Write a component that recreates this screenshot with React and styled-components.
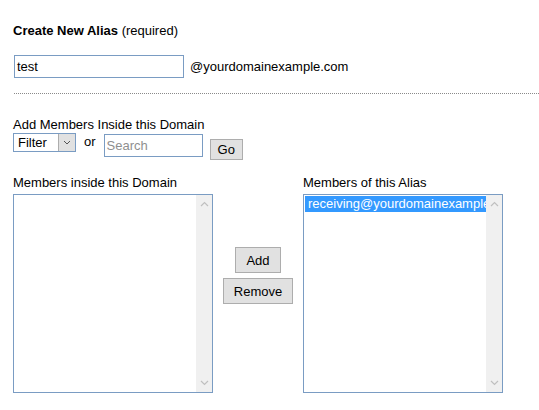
import React from 'react';
import styled, { createGlobalStyle } from 'styled-components';

const GlobalStyle = createGlobalStyle`
  body {
    margin: 0;
    background: #fff;
    font-family: "Liberation Sans", Arial, sans-serif;
    font-size: 13px;
    color: #000;
  }
`;

const Page = styled.div`
  padding: 23px 0 0 13px;
  width: 526px;
`;

const Title = styled.div`
  font-weight: bold;
  line-height: 15px;
  span {
    font-weight: normal;
  }
`;

const AliasRow = styled.div`
  display: flex;
  align-items: center;
  gap: 6px;
  margin-top: 17px;
  padding-left: 1px;
`;

const TextBox = styled.div`
  box-sizing: border-box;
  width: ${p => p.width}px;
  height: 23px;
  border: 1px solid #7a9cc3;
  padding: 3px 2px;
  line-height: 15px;
  color: ${p => (p.placeholder ? '#8f8f8f' : '#000')};
  margin-top: ${p => p.offset || 0}px;
`;

const Divider = styled.div`
  margin: 15px 0 0 1px;
  border-top: 1px dotted #8a8a8a;
`;

const Label = styled.div`
  line-height: 15px;
  margin-top: ${p => p.top}px;
`;

const FilterRow = styled.div`
  display: flex;
  align-items: flex-start;
  margin-top: 1px;
`;

const Select = styled.div`
  box-sizing: border-box;
  width: 63px;
  height: 19px;
  border: 1px solid #7a9cc3;
  display: flex;
  line-height: 15px;
  span {
    flex: 1;
    padding: 1px 0 0 4px;
  }
`;

const SelectArrow = styled.div`
  width: 16px;
  background: #e1e1e1;
  border-left: 1px solid #adadad;
  display: flex;
  align-items: center;
  justify-content: center;
`;

const Or = styled.span`
  line-height: 15px;
  margin: 1px 8px 0 8px;
`;

const Button = styled.button`
  box-sizing: border-box;
  height: ${p => p.h || 26}px;
  padding: 0 ${p => p.px || 10}px;
  background: #e1e1e1;
  border: 1px solid #adadad;
  border-radius: 0;
  font-family: inherit;
  font-size: 13px;
  color: #000;
  margin-top: ${p => p.offset || 0}px;
  margin-left: ${p => p.ml || 0}px;
`;

const Columns = styled.div`
  display: flex;
  margin-top: 2px;
`;

const Column = styled.div`
  width: ${p => p.width}px;
  display: flex;
  flex-direction: column;
`;

const Middle = styled.div`
  width: 90px;
  display: flex;
  flex-direction: column;
  align-items: center;
  gap: 5px;
  padding-top: 85px;
`;

const ListBox = styled.div`
  box-sizing: border-box;
  margin-top: 4px;
  width: 200px;
  height: 199px;
  border: 1px solid #7a9cc3;
  display: flex;
`;

const Items = styled.div`
  flex: 1;
  overflow: hidden;
  padding: 1px 0 0 1px;
`;

const Item = styled.div`
  height: 16px;
  line-height: 16px;
  padding-left: 3px;
  white-space: nowrap;
  overflow: hidden;
  background: ${p => (p.selected ? '#3399ff' : 'transparent')};
  color: ${p => (p.selected ? '#fff' : '#000')};
`;

const Scrollbar = styled.div`
  width: 16px;
  background: #f0f0f0;
  display: flex;
  flex-direction: column;
  justify-content: space-between;
  align-items: center;
  padding: 6px 0;
`;

const Chevron = ({ down }) => (
  <svg width="9" height="6" viewBox="0 0 9 6">
    <path
      d={down ? 'M1 1 L4.5 4.5 L8 1' : 'M1 5 L4.5 1.5 L8 5'}
      fill="none"
      stroke="#c0c0c0"
      strokeWidth="1.2"
    />
  </svg>
);

const List = ({ items = [] }) => (
  <ListBox>
    <Items>
      {items.map(it => (
        <Item key={it.text} selected={it.selected}>{it.text}</Item>
      ))}
    </Items>
    <Scrollbar>
      <Chevron />
      <Chevron down />
    </Scrollbar>
  </ListBox>
);

export default function App() {
  return (
    <Page>
      <GlobalStyle />
      <Title>
        Create New Alias <span>(required)</span>
      </Title>
      <AliasRow>
        <TextBox width={170}>test</TextBox>
        <span>@yourdomainexample.com</span>
      </AliasRow>
      <Divider />
      <Label top={23}>Add Members Inside this Domain</Label>
      <FilterRow>
        <Select>
          <span>Filter</span>
          <SelectArrow>
            <svg width="8" height="5" viewBox="0 0 8 5">
              <path d="M1 1 L4 4 L7 1" fill="none" stroke="#555" strokeWidth="1" />
            </svg>
          </SelectArrow>
        </Select>
        <Or>or</Or>
        <TextBox width={99} placeholder offset={1}>Search</TextBox>
        <Button h={21} px={7} offset={6} ml={7}>Go</Button>
      </FilterRow>
      <Columns>
        <Column width={200}>
          <Label top={13}>Members inside this Domain</Label>
          <List />
        </Column>
        <Middle>
          <Button>Add</Button>
          <Button>Remove</Button>
        </Middle>
        <Column width={200}>
          <Label top={13}>Members of this Alias</Label>
          <List items={[{ text: 'receiving@yourdomainexample.com', selected: true }]} />
        </Column>
      </Columns>
    </Page>
  );
}
